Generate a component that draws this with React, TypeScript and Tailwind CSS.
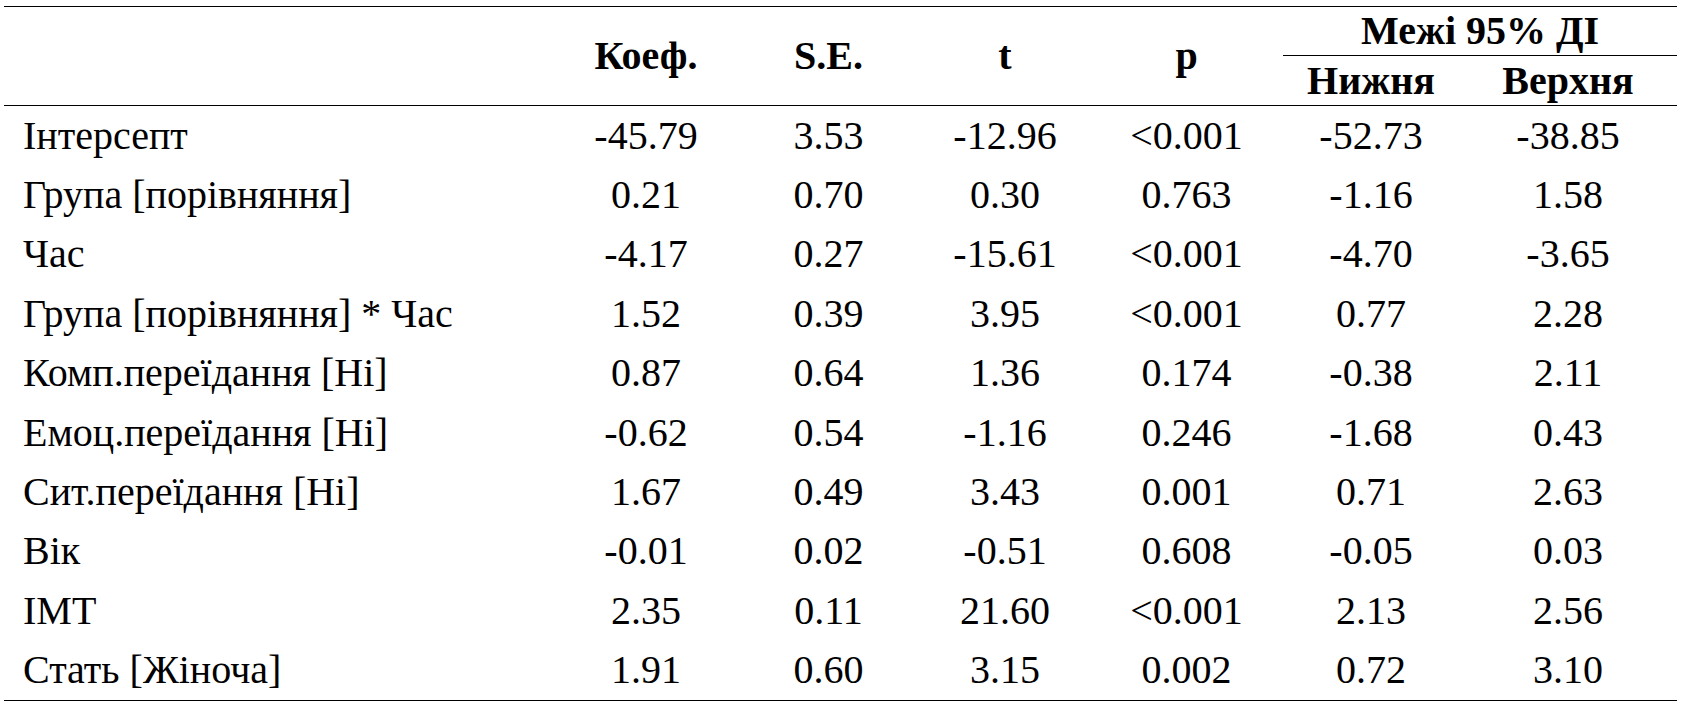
const rows: [string, string, string, string, string, string, string][] = [
  ['Інтерсепт', '-45.79', '3.53', '-12.96', '<0.001', '-52.73', '-38.85'],
  ['Група [порівняння]', '0.21', '0.70', '0.30', '0.763', '-1.16', '1.58'],
  ['Час', '-4.17', '0.27', '-15.61', '<0.001', '-4.70', '-3.65'],
  ['Група [порівняння] * Час', '1.52', '0.39', '3.95', '<0.001', '0.77', '2.28'],
  ['Комп.переїдання [Ні]', '0.87', '0.64', '1.36', '0.174', '-0.38', '2.11'],
  ['Емоц.переїдання [Ні]', '-0.62', '0.54', '-1.16', '0.246', '-1.68', '0.43'],
  ['Сит.переїдання [Ні]', '1.67', '0.49', '3.43', '0.001', '0.71', '2.63'],
  ['Вік', '-0.01', '0.02', '-0.51', '0.608', '-0.05', '0.03'],
  ['ІМТ', '2.35', '0.11', '21.60', '<0.001', '2.13', '2.56'],
  ['Стать [Жіноча]', '1.91', '0.60', '3.15', '0.002', '0.72', '3.10'],
];

// column template shared by header and body rows
const cols = 'grid grid-cols-[551px_182px_183px_170px_193px_176px_218px]';

export default function App() {
  return (
    <div className="h-[706px] w-[1686px] bg-white pl-[4px] pt-[6px] text-[40px] leading-none text-black">
      <div className="font-['Liberation_Serif']">
        <div className="w-[1673px] border-y border-black">
          <div className={`${cols} grid-rows-[49px_49px] border-b border-black font-bold`}>
            <div className="row-span-2" />
            <div className="row-span-2 flex items-center justify-center">Коеф.</div>
            <div className="row-span-2 flex items-center justify-center">S.E.</div>
            <div className="row-span-2 flex items-center justify-center">t</div>
            <div className="row-span-2 flex items-center justify-center">p</div>
            <div className="col-span-2 flex items-center justify-center border-b border-black">Межі 95% ДІ</div>
            <div className="flex items-center justify-center">Нижня</div>
            <div className="flex items-center justify-center">Верхня</div>
          </div>
          {rows.map((r) => (
            <div key={r[0]} className={`${cols} h-[59.4px]`}>
              <div className="flex items-center pl-[19px] whitespace-nowrap">{r[0]}</div>
              {r.slice(1).map((v, j) => (
                <div key={j} className="flex items-center justify-center">
                  {v}
                </div>
              ))}
            </div>
          ))}
        </div>
      </div>
    </div>
  );
}
